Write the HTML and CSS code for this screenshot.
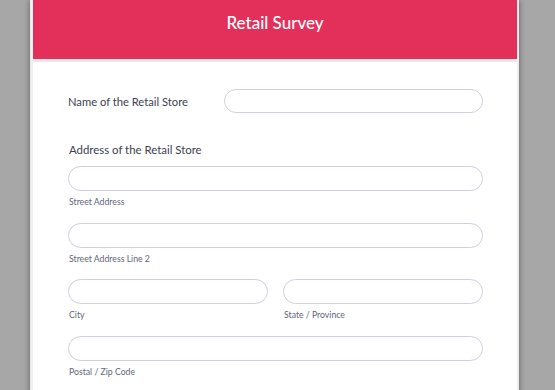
FILE: index.html
```html
<!DOCTYPE html>
<html>
<head>
<meta charset="utf-8">
<link rel="stylesheet" href="styles.css">
</head>
<body>
<div class="card">
  <header class="head"><h1 class="title">Retail Survey</h1></header>
  <form class="form">
    <div class="row">
      <label class="label">Name of the Retail Store</label>
      <input class="field grow" type="text">
    </div>
    <div class="section">Address of the Retail Store</div>
    <div class="group">
      <input class="field" type="text">
      <span class="sub">Street Address</span>
    </div>
    <div class="group tight">
      <input class="field" type="text">
      <span class="sub">Street Address Line 2</span>
    </div>
    <div class="pair">
      <div class="group">
        <input class="field" type="text">
        <span class="sub">City</span>
      </div>
      <div class="group">
        <input class="field" type="text">
        <span class="sub">State / Province</span>
      </div>
    </div>
    <div class="group">
      <input class="field" type="text">
      <span class="sub">Postal / Zip Code</span>
    </div>
  </form>
</div>
</body>
</html>
```

FILE: styles.css
```css
html, body {
  margin: 0;
  padding: 0;
  background: #a7a7a7;
  height: 100%;
  overflow: hidden;
}
body {
  font-family: Lato, "Open Sans", sans-serif;
}
.card {
  margin-left: 30px;
  width: 484px;
  min-height: 400px;
  background: #fff;
  border-left: 3px solid #eceef0;
  border-right: 2px solid #eceef0;
  box-shadow: 0 0 6px rgba(0,0,0,0.45);
}
.head {
  height: 59px;
  background: #e3305a;
  border-bottom: 3px solid #e7e9eb;
  display: flex;
  align-items: center;
  justify-content: center;
}
.title {
  margin: 0;
  color: #fff;
  font-size: 17px;
  font-weight: 500;
  padding-bottom: 14px;
}
.form {
  padding: 27px 34px 0 35px;
  display: flex;
  flex-direction: column;
}
.row {
  display: flex;
  align-items: center;
  margin-bottom: 29px;
}
.label {
  width: 156px;
  font-size: 11.2px;
  color: #3d4152;
}
.field {
  box-sizing: border-box;
  height: 25px;
  border: 1px solid #cfd1dd;
  border-radius: 13px;
  background: #fff;
  padding: 0 12px;
  margin: 0;
  outline: none;
  width: 100%;
}
.row .field.grow {
  width: auto;
  flex: 1;
  height: 24px;
}
.section {
  font-size: 11.4px;
  color: #3d4152;
  margin-left: 1px;
  line-height: 15px;
  margin-bottom: 9px;
}
.group {
  display: flex;
  flex-direction: column;
  margin-bottom: 16px;
  min-width: 0;
}
.group.tight {
  margin-bottom: 15px;
}
.sub {
  margin-top: 6px;
  margin-left: 1px;
  font-size: 8.7px;
  line-height: 10px;
  color: #62667a;
}
.pair {
  display: grid;
  grid-template-columns: 200px 200px;
  justify-content: space-between;
}
```
